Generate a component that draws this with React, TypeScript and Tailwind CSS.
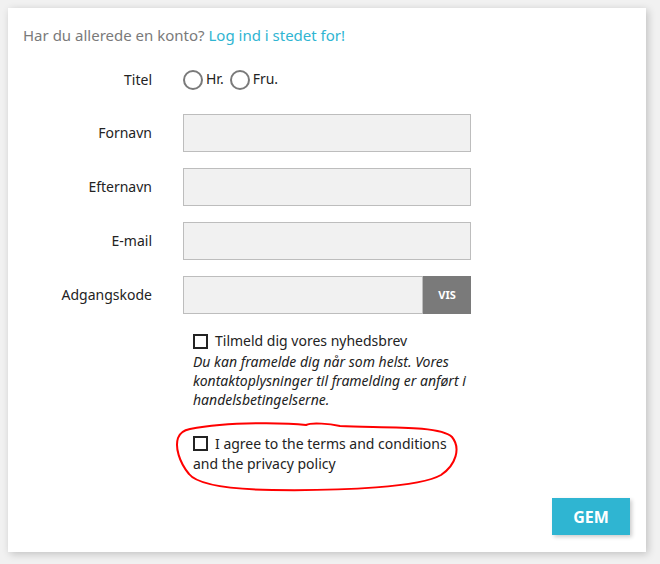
const FONT = { fontFamily: '"Noto Sans", "Open Sans", sans-serif' }

const FIELDS = ['Fornavn', 'Efternavn', 'E-mail']

export default function App() {
  return (
    <div className="min-h-[564px] w-[660px] bg-[#f1f1f1] p-2" style={FONT}>
      <div className="relative h-[544px] w-[638px] bg-white pt-4 pl-[15px] pr-4 shadow-[2px_2px_8px_0_rgba(0,0,0,0.2)]">
        {/* intro */}
        <p className="text-[15px] leading-[22px] text-[#7a7a7a]">
          Har du allerede en konto?{' '}
          <a className="text-[#2fb5d2]">Log ind i stedet for!</a>
        </p>

        {/* titel */}
        <div className="mt-[24px] flex items-center">
          <label className="w-[129px] pr-0 text-right text-sm text-[#232323]">Titel</label>
          <div className="ml-[31px] flex items-center text-sm text-[#232323]">
            <Radio />
            <span className="ml-[3px] -mt-[3px]">Hr.</span>
            <span className="ml-[6px] flex items-center">
              <Radio />
              <span className="ml-[3px] -mt-[3px]">Fru.</span>
            </span>
          </div>
        </div>

        {/* felter */}
        <div className="mt-[24px] flex flex-col gap-4">
          {FIELDS.map((f) => (
            <Row key={f} label={f}>
              <div className="h-[38px] w-[288px] border border-[#bdbdbd] bg-[#f1f1f1]" />
            </Row>
          ))}
          <Row label="Adgangskode">
            <div className="flex h-[38px] w-[288px]">
              <div className="flex-1 border border-[#bdbdbd] bg-[#f1f1f1]" />
              <button className="flex w-[48px] items-center justify-center bg-[#7a7a7a] text-[11px] font-bold text-white">
                VIS
              </button>
            </div>
          </Row>
        </div>

        {/* nyhedsbrev + vilkår */}
        <div className="ml-[170px] mt-[17px] w-[282px] text-[#232323]">
          <div className="flex items-center text-sm leading-5">
            <Box />
            <span className="ml-[7px]">Tilmeld dig vores nyhedsbrev</span>
          </div>
          <p className="mt-[1px] text-sm italic leading-[19px]">
            Du kan framelde dig når som helst. Vores kontaktoplysninger til framelding er anført i
            handelsbetingelserne.
          </p>
          <p className="mt-[25px] text-sm leading-5">
            <Box inline />
            <span className="ml-[7px]">I agree to the terms and conditions and the privacy policy</span>
          </p>
        </div>

        {/* gem */}
        <div className="absolute right-4 bottom-[17px]">
          <button className="h-[37px] w-[78px] bg-[#2fb5d2] text-base font-bold text-white shadow-[2px_2px_4px_0_rgba(0,0,0,0.2)]">
            GEM
          </button>
        </div>

        {/* rød markering */}
        <svg
          className="pointer-events-none absolute -top-2 -left-2"
          width="660"
          height="564"
          viewBox="0 0 660 564"
        >
          <path
            d="M190 429 C230 421 290 423 306 425 C312 422 330 424 340 426 C380 428 440 425 452 437 C461 448 456 465 441 475 C420 487 345 491 272 490 C222 489 196 483 189 474 C179 462 175 447 178 438 C180 432 185 430 190 429"
            fill="none"
            stroke="#ff0000"
            strokeWidth="2"
          />
        </svg>
      </div>
    </div>
  )
}

function Row({ label, children }: { label: string; children: React.ReactNode }) {
  return (
    <div className="flex items-center">
      <label className="w-[129px] text-right text-sm text-[#232323]">{label}</label>
      <div className="ml-[31px]">{children}</div>
    </div>
  )
}

function Radio() {
  return <span className="inline-block h-5 w-5 rounded-full border-2 border-[#7a7a7a] bg-white" />
}

function Box({ inline }: { inline?: boolean }) {
  return (
    <span
      className={`h-[15px] w-[15px] border-2 border-[#232323] ${
        inline ? 'inline-block align-[-2px]' : 'block shrink-0'
      }`}
    />
  )
}
